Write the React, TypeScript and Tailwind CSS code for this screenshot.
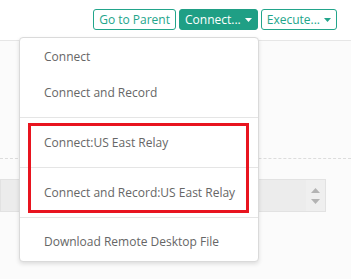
import React from "react";

function Caret({ color }: { color: string }) {
  return (
    <svg width="7" height="4" viewBox="0 0 7 4" className="ml-[4px]">
      <path d="M0 0 L7 0 L3.5 4 Z" fill={color} />
    </svg>
  );
}

export default function App() {
  const font = { fontFamily: '"Open Sans", "Noto Sans", sans-serif' };
  return (
    <div className="relative w-[351px] h-[279px] bg-white overflow-hidden" style={font}>
      {/* header */}
      <div className="h-[41px] border-b border-[#e6e6e6] flex justify-end items-start pt-[9px] pr-[14px] gap-[3px] bg-white">
        <button className="h-[21px] px-[5px] rounded-[3px] border border-[#22a58b] text-[#22a58b] text-[12px] leading-none flex items-center bg-white">
          Go to Parent
        </button>
        <button className="h-[21px] pl-[5px] pr-[5px] rounded-[3px] border border-[#1f9f85] bg-[#1f9f85] text-white text-[12px] leading-none flex items-center">
          Connect...
          <Caret color="#ffffff" />
        </button>
        <button className="h-[21px] pl-[5px] pr-[5px] rounded-[3px] border border-[#22a58b] text-[#22a58b] text-[12px] leading-none flex items-center bg-white">
          Execute...
          <Caret color="#22a58b" />
        </button>
      </div>
      {/* body */}
      <div className="bg-[#fbfbfb] h-[238px] pt-[117px]">
        <div className="border-t border-dashed border-[#dcdcdc]" />
        <div className="mt-[20px] w-[326px] h-[33px] bg-[#ececec] border border-[#e2e2e2] flex justify-end">
          <div className="w-[19px] flex flex-col items-center justify-center gap-[6px] bg-[#efefef]">
            <svg width="9" height="5" viewBox="0 0 9 5">
              <path d="M0 5 L9 5 L4.5 0 Z" fill="#b3b3b3" />
            </svg>
            <svg width="9" height="5" viewBox="0 0 9 5">
              <path d="M0 0 L9 0 L4.5 5 Z" fill="#b3b3b3" />
            </svg>
          </div>
        </div>
      </div>
      {/* dropdown menu */}
      <div className="absolute left-[19px] top-[37px] w-[240px] bg-white border border-[#dadada] rounded-[4px] shadow-[0_2px_4px_rgba(0,0,0,0.12)] pt-[1px] pb-[1px] text-[12px] text-[#666]">
        <div className="h-[36px] flex items-center pl-[24px]">Connect</div>
        <div className="h-[36px] flex items-center pl-[24px]">Connect and Record</div>
        <div className="mt-[6px] mb-[7px] border-t border-[#e5e5e5]" />
        <div className="h-[36px] flex items-center pl-[24px]">Connect:US East Relay</div>
        <div className="mt-[6px] mb-[7px] border-t border-[#e5e5e5]" />
        <div className="h-[36px] flex items-center pl-[24px]">Connect and Record:US East Relay</div>
        <div className="mt-[6px] mb-[6px] border-t border-[#e5e5e5]" />
        <div className="h-[36px] flex items-center pl-[24px]">Download Remote Desktop File</div>
      </div>
      {/* red annotation box */}
      <div className="absolute left-[28px] top-[123px] w-[221px] h-[90px] border-[3px] border-[#e8141f]" />
    </div>
  );
}
